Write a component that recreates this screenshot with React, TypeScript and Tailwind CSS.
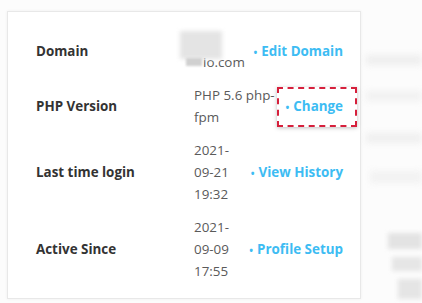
import type { ReactNode } from "react";

type Row = {
  label: string;
  value: ReactNode;
  link: string;
  highlight?: boolean;
};

const rows: Row[] = [
  {
    label: "Domain",
    value: (
      <div className="flex flex-col">
        <div className="ml-[-14px] mt-[2px] h-[28px] w-[42px] bg-[#e4e4e4] blur-[2px]" />
        <div className="mt-[-8px] flex items-center">
          <span className="ml-[-8px] mr-[1px] h-[8px] w-[16px] bg-[#d0d0d0] blur-[1px]" />
          io.com
        </div>
      </div>
    ),
    link: "Edit Domain",
  },
  {
    label: "PHP Version",
    value: (
      <>
        PHP 5.6 php-
        <br />
        fpm
      </>
    ),
    link: "Change",
    highlight: true,
  },
  {
    label: "Last time login",
    value: (
      <>
        2021-
        <br />
        09-21
        <br />
        19:32
      </>
    ),
    link: "View History",
  },
  {
    label: "Active Since",
    value: (
      <>
        2021-
        <br />
        09-09
        <br />
        17:55
      </>
    ),
    link: "Profile Setup",
  },
];

function BlurBars() {
  return (
    <div className="flex flex-1 flex-col pt-[44px]">
      <div className="ml-[5px] h-[10px] bg-[#eeeeee] blur-[3px]" />
      <div className="ml-[5px] mt-[26px] h-[10px] bg-[#f1f1f1] blur-[3px]" />
      <div className="ml-[5px] mt-[32px] h-[10px] bg-[#efefef] blur-[3px]" />
      <div className="ml-[9px] mt-[28px] h-[12px] bg-[#f2f2f2] blur-[3px]" />
      <div className="ml-[27px] mt-[50px] h-[16px] bg-[#e3e3e3] blur-[2px]" />
      <div className="ml-[31px] mt-[8px] h-[14px] bg-[#e6e6e6] blur-[2px]" />
      <div className="ml-[37px] mt-[8px] h-[20px] bg-[#e5e5e5] blur-[2px]" />
    </div>
  );
}

export default function App() {
  return (
    <div className="flex h-[303px] w-[422px] overflow-hidden bg-[#fcfcfc] pl-[7px] pt-[11px] font-['Open_Sans',sans-serif]">
      <div className="h-[288px] w-[354px] shrink-0 border border-[#e8e8e8] bg-white pl-[28px] pr-[17px] pt-[17px] shadow-[0_0_3px_rgba(0,0,0,0.06)]">
        <div className="flex flex-col gap-[11px]">
          {rows.map((row) => (
            <div key={row.label} className="flex items-center text-[13.4px] leading-[22px]">
              <div className="w-[158px] shrink-0 font-bold text-[#333333]">{row.label}</div>
              <div className="flex-1 text-[#5a5a5a]">{row.value}</div>
              <div className="relative shrink-0 font-bold text-[#3dbcf3]">
                <span className="mr-[4px] text-[10px]">•</span>
                {row.link}
                {row.highlight && (
                  <span className="absolute bottom-[-9px] left-[-9px] right-[-14px] top-[-8px] border-[2px] border-dashed border-[#d6203c] shadow-[0_1px_4px_rgba(0,0,0,0.25)]" />
                )}
              </div>
            </div>
          ))}
        </div>
      </div>
      <BlurBars />
    </div>
  );
}
